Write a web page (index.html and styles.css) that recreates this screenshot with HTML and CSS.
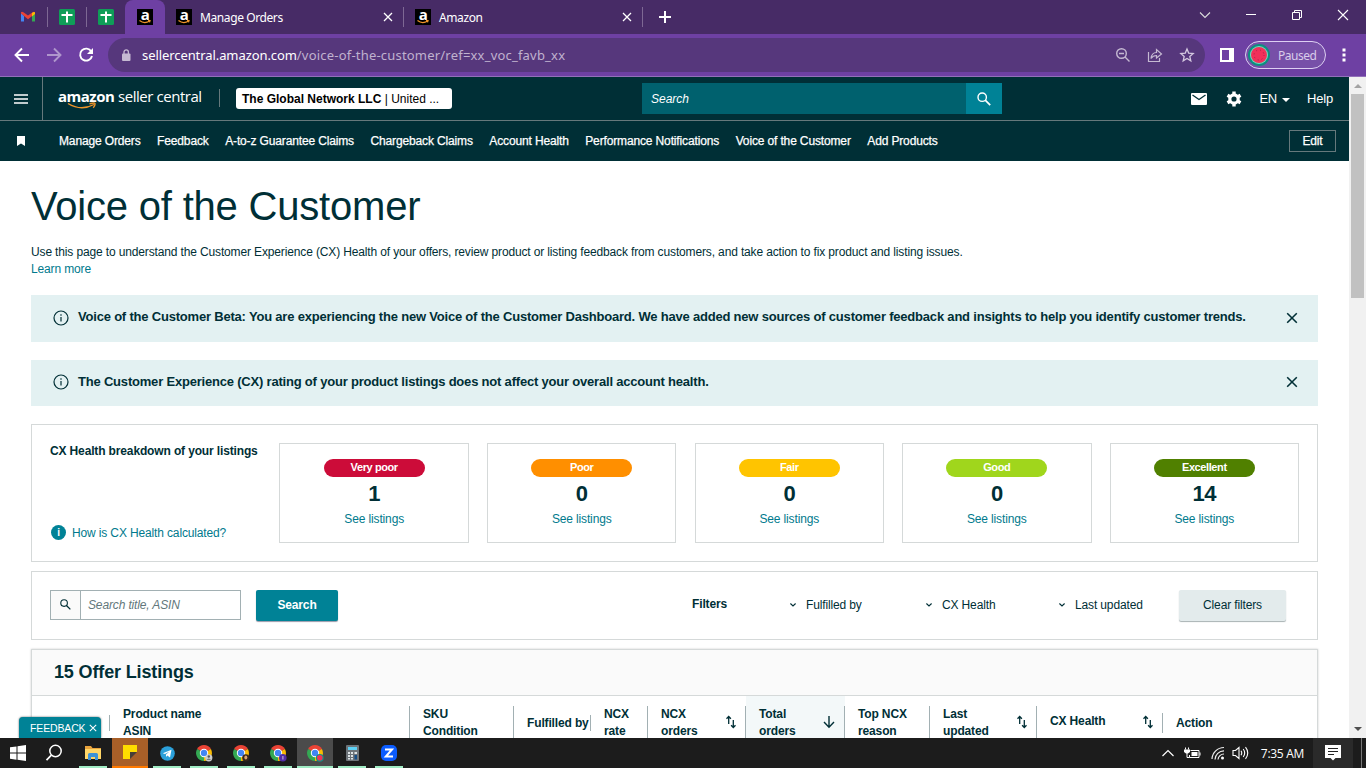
FILE: index.html
```html
<!DOCTYPE html>
<html lang="en">
<head>
    <meta charset="UTF-8">
    <meta name="viewport" content="width=device-width, initial-scale=1.0">
    <title>Voice of the Customer</title>
    <link rel="stylesheet" href="styles.css">
</head>
<body>
    <svg class="sprite">
        <symbol id="smile" viewBox="0 0 12 4"><path d="M.5 .6Q5.5 4.4 10.6 1M9 .6l2-.1-.5 1.9" fill="none" stroke="#f0942a" stroke-width="1.300"/></symbol>
        <symbol id="sheets" viewBox="0 0 16 16"><rect width="16" height="16" rx="1.5" fill="#0f9d58"/><path d="M2.500 6h11M8 2.500v11" stroke="#fff" stroke-width="2"/></symbol>
        <symbol id="close" viewBox="0 0 10 10"><path d="M1 1l8 8M9 1l-8 8" fill="none" stroke="currentColor" stroke-width="1.3"/></symbol>
        <symbol id="search" viewBox="0 0 14 14"><circle cx="5.2" cy="5.2" r="4.200" fill="none" stroke="currentColor" stroke-width="1.400"/><path d="M8.2 8.2l5 5" stroke="currentColor" stroke-width="1.700"/></symbol>
        <symbol id="info" viewBox="0 0 16 16"><circle cx="8" cy="8" r="7" fill="none" stroke="currentColor" stroke-width="1.200"/><path d="M8 7v4.500M8 4.300v1.400" stroke="currentColor" stroke-width="1.200"/></symbol>
        <symbol id="chev" viewBox="0 0 8 6"><path d="M1.4 1.5L4 4l2.6-2.5" fill="none" stroke="currentColor" stroke-width="1.1"/></symbol>
        <symbol id="sort" viewBox="0 0 10 14"><path d="M2.700 9V1.5M.5 3.700L2.700 1.5 4.900 3.700M7.300 5V12.500M5.100 10.300L7.300 12.500 9.500 10.300" fill="none" stroke="currentColor" stroke-width="1.3"/></symbol>
        <symbol id="chrome" viewBox="0 0 16 16">
            <path d="M8 8L1.1 4A8 8 0 0 1 14.9 4z" fill="#ea4335"/>
            <path d="M8 8L14.9 4A8 8 0 0 1 8 16z" fill="#fbbc04"/>
            <path d="M8 8v8A8 8 0 0 1 1.1 4z" fill="#34a853"/>
            <circle cx="8" cy="8" r="4.2" fill="#fff"/><circle cx="8" cy="8" r="3.2" fill="#4285f4"/>
        </symbol>
    </svg>

    <!-- Browser tabs -->
    <div class="tabstrip">
        <div class="tab pin first"><svg width="16" height="16" viewBox="0 0 16 16"><path d="M1 4v8.5h3V7z" fill="#4285f4"/><path d="M15 4v8.5h-3V7z" fill="#34a853"/><path d="M1 4.6V3.2Q2 2.2 3.4 3.2L8 6.6l4.6-3.4Q14 2.2 15 3.2v1.6L8 10.2z" fill="#ea4335"/><path d="M12 4v3.5l3-2.4V3.4Q14 2.4 12 4" fill="#fbbc04"/></svg></div>
        <div class="tab pin"><svg width="16" height="16"><use href="#sheets"/></svg></div>
        <div class="tab pin nosep"><svg width="16" height="16"><use href="#sheets"/></svg></div>
        <div class="tab active"><span class="fav">a<svg><use href="#smile"/></svg></span></div>
        <div class="tab wide"><span class="fav">a<svg><use href="#smile"/></svg></span><span class="tab-name">Manage Orders</span><svg class="tab-close"><use href="#close"/></svg></div>
        <div class="tab wide"><span class="fav">a<svg><use href="#smile"/></svg></span><span class="tab-name">Amazon</span><svg class="tab-close"><use href="#close"/></svg></div>
        <svg class="plus" width="12" height="12" viewBox="0 0 12 12"><path d="M6 0v12M0 6h12" stroke="#fff" stroke-width="2"/></svg>
        <div class="window-buttons">
            <svg width="12" height="12" viewBox="0 0 12 12"><path d="M1 3.500l5 5 5-5" fill="none" stroke="#ddd" stroke-width="1.1"/></svg>
            <svg width="12" height="12" viewBox="0 0 12 12"><path d="M1 5.500h10" stroke="#fff"/></svg>
            <svg width="12" height="12" viewBox="0 0 12 12"><path d="M1.500 3.500h7v7h-7zM3.500 3.500V1.500h7v7h-2" fill="none" stroke="#fff"/></svg>
            <svg width="12" height="12" viewBox="0 0 12 12"><path d="M1 1l10 10M11 1L1 11" stroke="#fff" stroke-width="1.1"/></svg>
        </div>
    </div>

    <!-- Address bar -->
    <div class="toolbar">
        <svg width="16" height="16" viewBox="0 0 16 16"><path d="M15 8H2M8 1.500L1.500 8l6.500 6.500" fill="none" stroke="#fff" stroke-width="1.900"/></svg>
        <svg class="dim" width="16" height="16" viewBox="0 0 16 16"><path d="M1 8h13M8 1.500L14.500 8 8 14.500" fill="none" stroke="#fff" stroke-width="1.900"/></svg>
        <svg width="16" height="16" viewBox="0 0 16 16"><path d="M13.300 4.500A6 6 0 1 0 14 9" fill="none" stroke="#fff" stroke-width="1.900"/><path d="M15 1v6H9z" fill="#fff"/></svg>
        <div class="omnibox">
            <svg width="10" height="13" viewBox="0 0 10 13"><rect x="1" y="4.500" width="8.500" height="7.500" rx="1" fill="#c5b9d2"/><path d="M3 5V3a2.200 2.200 0 0 1 4.400 0v2" fill="none" stroke="#c5b9d2" stroke-width="1.300"/></svg>
            <span class="url"><span class="domain">sellercentral.amazon.com</span><span class="path">/voice-of-the-customer/ref=xx_voc_favb_xx</span></span>
            <div class="omni-icons">
                <svg width="16" height="16" viewBox="0 0 16 16"><circle cx="6.500" cy="6.500" r="4.800" fill="none" stroke="#c5b9d2" stroke-width="1.400"/><path d="M10 10l4.500 4.500M4 6.500h5" stroke="#c5b9d2" stroke-width="1.400"/></svg>
                <svg width="16" height="16" viewBox="0 0 16 16"><path d="M1.500 5v9.500h11V11M4 11.500c.5-4 2.500-6 5.500-6V2.500L14.500 7 9.500 11V8.500c-2.500 0-4 .8-5.500 3z" fill="none" stroke="#c5b9d2" stroke-width="1.200"/></svg>
                <svg width="16" height="16" viewBox="0 0 16 16"><path d="M8 2l1.700 4.100 4.500.4-3.400 3 1 4.400L8 11.500l-3.800 2.400 1-4.400-3.400-3 4.500-.4z" fill="none" stroke="#d3c8df" stroke-width="1.300"/></svg>
            </div>
        </div>
        <svg class="side-panel" width="14" height="14" viewBox="0 0 14 14"><path d="M1 1h12v12H1z" fill="none" stroke="#fff" stroke-width="2"/><path d="M9 0h5v14H9z" fill="#fff"/></svg>
        <div class="profile"><svg class="melon" width="22" height="22" viewBox="0 0 22 22"><circle cx="11" cy="11" r="11" fill="#0d8f80"/><circle cx="11" cy="11" r="9" fill="#6fe0c0"/><circle cx="11" cy="11" r="8" fill="#f2305a"/><circle cx="11" cy="11" r="5" fill="none" stroke="#a3214a" stroke-dasharray="1 3"/></svg>Paused</div>
        <svg class="dots" width="4" height="14" viewBox="0 0 4 14"><path d="M.5 .5h3v3h-3zM.5 5.500h3v3h-3zM.5 10.500h3v3h-3z" fill="#fff"/></svg>
    </div>

    <div class="viewport">
        <div class="page">
            <header class="header">
                <div class="menu"><svg width="14" height="10" viewBox="0 0 14 10"><path d="M0 1h14M0 5h14M0 9h14" stroke="#fff" stroke-width="1.600"/></svg></div>
                <div class="logo"><b>amazon</b><span>seller central</span><svg viewBox="0 0 30 8"><path d="M1 1.500Q14 9.500 27 2.500M22.500 1.800q6-1.500 5.500 0 .2 1.800-1.800 4" fill="none" stroke="#f0942a" stroke-width="1.400"/></svg></div>
                <div class="merchant"><b>The Global Network LLC</b> | United ...</div>
                <div class="top-search"><span>Search</span><div><svg width="14" height="14"><use href="#search"/></svg></div></div>
                <div class="top-links">
                    <svg width="16" height="12" viewBox="0 0 16 12"><rect width="16" height="12" rx="1" fill="#fff"/><path d="M1.500 2L8 6.500 14.500 2" fill="none" stroke="#002f36" stroke-width="1.300"/></svg>
                    <svg class="gear" width="16" height="16" viewBox="0 0 16 16"><circle cx="8" cy="8" r="4.200" fill="none" stroke="#fff" stroke-width="3.200"/><path d="M8 .5v3M8 12.500v3M1.500 4.200l2.600 1.500M11.900 10.300l2.600 1.500M1.500 11.800l2.600-1.500M11.900 5.700l2.600-1.500" stroke="#fff" stroke-width="3.400"/></svg>
                    <span>EN</span>
                    <i class="caret"></i>
                    <span>Help</span>
                </div>
            </header>
            <nav class="nav">
                <svg class="bookmark" width="8" height="10" viewBox="0 0 8 10"><path d="M0 0h8v10L4 7.500 0 10z" fill="#fff"/></svg>
                <a>Manage Orders</a>
                <a>Feedback</a>
                <a>A-to-z Guarantee Claims</a>
                <a>Chargeback Claims</a>
                <a>Account Health</a>
                <a>Performance Notifications</a>
                <a>Voice of the Customer</a>
                <a>Add Products</a>
                <button class="edit">Edit</button>
            </nav>

            <main class="content">
                <h1>Voice of the Customer</h1>
                <p class="intro">Use this page to understand the Customer Experience (CX) Health of your offers, review product or listing feedback from customers, and take action to fix product and listing issues.</p>
                <a class="learn">Learn more</a>

                <div class="alert beta"><svg class="info"><use href="#info"/></svg><span>Voice of the Customer Beta: You are experiencing the new Voice of the Customer Dashboard. We have added new sources of customer feedback and insights to help you identify customer trends.</span><svg class="dismiss"><use href="#close"/></svg></div>
                <div class="alert"><svg class="info"><use href="#info"/></svg><span>The Customer Experience (CX) rating of your product listings does not affect your overall account health.</span><svg class="dismiss"><use href="#close"/></svg></div>

                <section class="health">
                    <div class="health-side">
                        <h3>CX Health breakdown of your listings</h3>
                        <a><span class="info-dot">i</span>How is CX Health calculated?</a>
                    </div>
                    <div class="card"><span class="pill very-poor">Very poor</span><strong>1</strong><a>See listings</a></div>
                    <div class="card"><span class="pill poor">Poor</span><strong>0</strong><a>See listings</a></div>
                    <div class="card"><span class="pill fair">Fair</span><strong>0</strong><a>See listings</a></div>
                    <div class="card"><span class="pill good">Good</span><strong>0</strong><a>See listings</a></div>
                    <div class="card"><span class="pill excellent">Excellent</span><strong>14</strong><a>See listings</a></div>
                </section>

                <section class="filters">
                    <div class="asin-box"><span><svg width="11" height="11"><use href="#search"/></svg></span><em>Search title, ASIN</em></div>
                    <button class="search-btn">Search</button>
                    <b class="filters-label">Filters</b>
                    <div class="filter f1"><svg><use href="#chev"/></svg>Fulfilled by</div>
                    <div class="filter f2"><svg><use href="#chev"/></svg>CX Health</div>
                    <div class="filter f3"><svg><use href="#chev"/></svg>Last updated</div>
                    <button class="clear-btn">Clear filters</button>
                </section>

                <section class="listings">
                    <h2>15 Offer Listings</h2>
                    <div class="thead">
                        <div class="th c0"></div>
                        <div class="th c1">Product name<br>ASIN</div>
                        <div class="th c2">SKU<br>Condition</div>
                        <div class="th c3 single">Fulfilled by</div>
                        <div class="th c4">NCX<br>rate</div>
                        <div class="th c5">NCX<br>orders<svg class="sort"><use href="#sort"/></svg></div>
                        <div class="th c6 sorted">Total<br>orders<svg class="down" viewBox="0 0 12 14"><path d="M6 1v11M1 7l5 5.200L11 7" fill="none" stroke="currentColor" stroke-width="1.400"/></svg></div>
                        <div class="th c7">Top NCX<br>reason</div>
                        <div class="th c8">Last<br>updated<svg class="sort"><use href="#sort"/></svg></div>
                        <div class="th c9 single">CX Health<svg class="sort"><use href="#sort"/></svg></div>
                        <div class="th c10 single">Action</div>
                    </div>
                </section>
            </main>
            <div class="feedback">FEEDBACK<svg><use href="#close"/></svg></div>
        </div>
        <div class="scrollbar"><i class="up"></i><div class="thumb"></div><i class="dn"></i></div>
    </div>

    <!-- Windows taskbar -->
    <div class="taskbar">
        <div class="task"><svg width="16" height="16" viewBox="0 0 16 16"><path d="M0 2.300L6.500 1.400v6.200H0zM7.500 1.200L16 0v7.600H7.500zM0 8.500h6.500v6.200L0 13.800zM7.500 8.500H16V16l-8.500-1.200z" fill="#fff"/></svg></div>
        <div class="task find"><svg width="18" height="18" viewBox="0 0 18 18"><circle cx="10.500" cy="7" r="5.700" fill="none" stroke="#fff" stroke-width="1.500"/><path d="M6.400 11.200L1.500 16.200" stroke="#fff" stroke-width="1.700"/></svg></div>
        <div class="task open"><svg width="18" height="16" viewBox="0 0 18 16"><path d="M1 1h6l1.500 2H17v4H1z" fill="#e8a33d"/><path d="M1 4h16v10H1z" fill="#ffd667"/><path d="M4 15V9.500Q4 8 5.500 8h7Q14 8 14 9.500V15h-3v-3H7v3z" fill="#3c92d8"/></svg></div>
        <div class="task notes"><svg width="14" height="14" viewBox="0 0 14 14"><path d="M0 0h14v7H7v7H0z" fill="#fd0"/><path d="M7 7h7l-7 7z" fill="#463f37"/></svg></div>
        <div class="task open"><svg width="15" height="15" viewBox="0 0 15 15"><circle cx="7.500" cy="7.500" r="7.300" fill="#2ba0da"/><path d="M2.800 7.300L11.500 3.800 10 11.500 7.300 9.500 6 11V8.500l3.500-3-4.500 2.600z" fill="#fff"/></svg></div>
        <div class="task open"><svg width="17" height="17" viewBox="0 0 17 17"><use href="#chrome" width="16" height="16"/><circle cx="12.800" cy="12.800" r="3.600" fill="#ccc"/><circle cx="12.800" cy="11.500" r="1.200" fill="#555"/><path d="M10.500 15q2.300-3 4.600 0" fill="#777"/></svg></div>
        <div class="task open"><svg width="17" height="17" viewBox="0 0 17 17"><use href="#chrome" width="16" height="16"/><circle cx="12.800" cy="12.800" r="3.600" fill="#33251d"/><ellipse cx="12.800" cy="12.500" rx="1.500" ry="2" fill="#d9a36d"/></svg></div>
        <div class="task open"><svg width="17" height="17" viewBox="0 0 17 17"><use href="#chrome" width="16" height="16"/><circle cx="12.800" cy="12.800" r="3.800" fill="#512da8"/><path d="M12 11h1.700v3.500H12z" fill="#9a86cb"/></svg></div>
        <div class="task open current"><svg width="17" height="17" viewBox="0 0 17 17"><use href="#chrome" width="16" height="16"/><circle cx="12.800" cy="12.800" r="3.900" fill="#0d9488"/><circle cx="12.800" cy="12.800" r="2.800" fill="#f0325a"/></svg></div>
        <div class="task open"><svg width="13" height="16" viewBox="0 0 13 16"><rect width="13" height="16" rx="1" fill="#6d7378"/><path d="M2 2h9v3H2z" fill="#5ed1f5"/><path d="M2 7h2v2H2zM5 7h2v2H5zM2 10h2v2H2zM5 10h2v2H5zM2 13h2v1.500H2zM5 13h2v1.500H5zM8.500 7H11v2H8.500z" fill="#dde3e6"/><path d="M8.500 10H11v4.500H8.500z" fill="#164e86"/></svg></div>
        <div class="task open"><svg width="16" height="16" viewBox="0 0 16 16"><rect width="16" height="16" rx="5" fill="#0b5cff"/><path d="M4 4.500h7L4.800 11.500H12" fill="none" stroke="#fff" stroke-width="2"/></svg></div>
        <div class="tray">
            <svg width="14" height="8" viewBox="0 0 14 8"><path d="M1.500 7L7 1.500 12.500 7" fill="none" stroke="#fff" stroke-width="1.200"/></svg>
            <svg class="battery" width="17" height="13" viewBox="0 0 17 13"><path d="M6.500 3.500h8.500v7H5.500V8M16 5.500v3M1.500 .5v2M4.500 .5v2M3 6v4.500h2.500" fill="none" stroke="#fff"/><path d="M0 2.500h6V5L4 6.500H2L0 5zM7.500 5h6v4H7.500z" fill="#fff"/></svg>
            <svg class="wifi" width="14" height="14" viewBox="0 0 14 14"><path d="M1 13A12 12 0 0 1 13 1.500M4 13.500A9 9 0 0 1 13 4.800M7 13.500A6 6 0 0 1 13 8" fill="none" stroke="#eee" stroke-width="1.200"/><circle cx="11.500" cy="12" r="1.500" fill="#fff"/></svg>
            <svg class="sound" width="17" height="14" viewBox="0 0 17 14"><path d="M1 4.500h2.500L7 1.500v11L3.500 9.500H1zM9 4.800q1.500 2.200 0 4.400M11.200 3q3 4 0 8M13.500 1.200q4.500 5.800 0 11.600" fill="none" stroke="#fff" stroke-width="1.100"/></svg>
            <span class="clock">7:35 AM</span>
            <div class="notify"><svg width="16" height="16" viewBox="0 0 16 16"><path d="M0 0h16v13h-5.500L8 15.500 5.500 13H0z" fill="#fff"/><path d="M3 3.500h10M3 6.500h10M3 9.500h6" stroke="#222"/></svg></div>
        </div>
    </div>
</body>
</html>
```
FILE: styles.css
```css
* {
    margin: 0;
    padding: 0;
    box-sizing: border-box;
}

body {
    width: 1366px;
    height: 768px;
    overflow: hidden;
    background: #fff;
    color: #002f36;
    font-family: 'Liberation Sans', Arial, sans-serif;
    font-size: 12px;
}

svg {
    flex: none;
    display: block;
}

.sprite {
    display: none;
}

button {
    font-family: inherit;
    font-size: 12px;
    letter-spacing: inherit;
    border: none;
}

/* Tabs */
.tabstrip {
    display: flex;
    align-items: center;
    height: 34px;
    background: #472b66;
    color: #fff;
    font: 12px 'Noto Sans', sans-serif;
    letter-spacing: -.4px;
}

.tab {
    display: flex;
    align-items: center;
    height: 34px;
    padding-left: 11px;
}

.tab.pin {
    width: 39px;
}

.tab.first {
    width: 48px;
    padding-left: 20px;
}

.tab.nosep {
    width: 38px;
}

.tab.pin:not(.nosep),
.tab.wide {
    background: linear-gradient(#7e6894, #7e6894) right center / 1px 20px no-repeat;
}

.tab.active {
    width: 40px;
    padding-left: 12px;
    background: #6e40a3;
    border-radius: 8px 8px 0 0;
}

.tab.wide {
    width: 239px;
}

.fav {
    display: flex;
    flex-direction: column;
    align-items: center;
    width: 16px;
    height: 16px;
    background: #000;
    font: bold 15px/11px 'Open Sans', sans-serif;
}

.fav svg {
    width: 12px;
    height: 4px;
}

.tab-name {
    margin-left: 8px;
    flex: 1;
}

.tab-close {
    width: 10px;
    height: 10px;
    margin-right: 11px;
}

.plus {
    margin-left: 16px;
}

.window-buttons {
    display: flex;
    gap: 34px;
    margin: -5px 17px 0 auto;
}

/* Toolbar */
.toolbar {
    display: flex;
    align-items: center;
    height: 43px;
    padding-left: 14px;
    gap: 16px;
    background: #6e40a3;
    border-bottom: 1px solid #9270b9;
}

.dim {
    opacity: .45;
}

.omnibox {
    display: flex;
    align-items: center;
    width: 1097px;
    height: 34px;
    margin-left: -2px;
    padding: 0 10px 0 13px;
    border-radius: 17px;
    background: #56377c;
}

.url {
    margin-left: 11px;
    font: 13px 'Noto Sans', sans-serif;
    color: #c0b2cf;
}

.domain {
    color: #fff;
    letter-spacing: -.08px;
}

.path {
    letter-spacing: .2px;
}

.omni-icons {
    display: flex;
    gap: 16px;
    margin-left: auto;
}

.side-panel {
    margin-left: -1px;
}

.profile {
    display: flex;
    align-items: center;
    width: 81px;
    height: 28px;
    margin-left: -5px;
    border: 1px solid #ddd0f2;
    border-radius: 14px;
    background: #7750a8;
    color: #d9ccea;
    font: 12px 'Noto Sans', sans-serif;
    letter-spacing: -.5px;
}

.melon {
    margin: 0 8px 0 2px;
}

/* Page frame */
.viewport {
    display: flex;
    height: 661px;
    overflow: hidden;
    letter-spacing: -.14px;
}

.page {
    position: relative;
    width: 1349px;
    height: 661px;
    overflow: hidden;
}

.scrollbar {
    display: flex;
    flex-direction: column;
    align-items: center;
    width: 17px;
    background: #f1f1f1;
}

.scrollbar i {
    width: 0;
    height: 0;
    border: 4px solid transparent;
}

.scrollbar .up {
    margin-top: 3px;
    border-bottom-color: #a3a3a3;
}

.scrollbar .thumb {
    width: 13px;
    height: 204px;
    margin-top: 6px;
    background: #c1c1c1;
}

.scrollbar .dn {
    margin: auto 0 3px;
    border-top-color: #505050;
}

/* Seller Central header */
.header {
    display: flex;
    align-items: center;
    height: 44px;
    background: #002f36;
    border-bottom: 1px solid #66797c;
    color: #fff;
    letter-spacing: 0;
}

.menu {
    display: flex;
    align-items: center;
    justify-content: center;
    width: 43px;
    height: 43px;
    border-right: 1px solid #66797c;
}

.logo {
    position: relative;
    display: flex;
    width: 177px;
    height: 18px;
    padding-left: 15px;
    margin-top: -2px;
    border-right: 1px solid #66797c;
    font: 15px/15px 'Open Sans', sans-serif;
}

.logo b {
    width: 60px;
    letter-spacing: -.5px;
}

.logo span {
    letter-spacing: -.45px;
}

.logo svg {
    position: absolute;
    left: 24px;
    top: 13px;
    width: 30px;
    height: 8px;
}

.merchant {
    width: 216px;
    height: 21px;
    margin-left: 16px;
    padding-left: 6px;
    border-radius: 3px;
    background: #fff;
    color: #000;
    line-height: 22px;
    white-space: nowrap;
}

.top-search {
    display: flex;
    align-items: center;
    justify-content: space-between;
    width: 360px;
    height: 31px;
    margin-left: 190px;
    padding-left: 9px;
    background: #00616e;
    font-style: italic;
}

.top-search div {
    display: flex;
    align-items: center;
    justify-content: center;
    width: 36px;
    height: 31px;
    background: #008296;
}

.top-links {
    display: flex;
    align-items: center;
    margin: 0 16px 0 auto;
    font-size: 13px;
    letter-spacing: -.2px;
}

.gear {
    margin: 0 17px 0 19px;
}

.caret {
    margin: 3px 17px 0 5px;
    border: 4px solid transparent;
    border-top-color: #fff;
    border-bottom: 0;
}

.nav {
    display: flex;
    align-items: center;
    height: 40px;
    padding: 0 13px 0 17px;
    gap: 16.500px;
    background: #002f36;
    color: #fff;
    -webkit-text-stroke: .25px;
}

.bookmark {
    margin-right: 17.500px;
}

.edit {
    width: 47px;
    height: 22px;
    margin-left: auto;
    border: 1px solid #66797c;
    background: none;
    color: #fff;
}

/* Content */
.content {
    padding: 0 31px;
}

h1 {
    height: 83px;
    padding-top: 22px;
    font-size: 40px;
    line-height: 47px;
    letter-spacing: -.2px;
    font-weight: normal;
}

.intro {
    height: 17px;
    line-height: 16px;
    white-space: nowrap;
}

a {
    text-decoration: none;
}

.content a {
    color: #007a8d;
}

.learn {
    display: block;
    height: 34px;
    line-height: 16px;
}

.alert {
    display: flex;
    align-items: center;
    height: 46px;
    margin-bottom: 18px;
    padding: 0 20px 2px 22px;
    background: #e3f1f2;
    font-size: 13px;
    font-weight: bold;
    letter-spacing: -.2px;
    white-space: nowrap;
}

.beta {
    height: 47px;
}

.info {
    width: 16px;
    height: 16px;
    margin-right: 9px;
}

.alert span {
    margin-top: -2px;
}

.dismiss {
    width: 12px;
    height: 12px;
    margin-left: auto;
}

.health {
    display: flex;
    gap: 18.1px;
    height: 138px;
    padding: 18px;
    border: 1px solid #d5d9d9;
}

.health-side {
    display: flex;
    flex-direction: column;
    justify-content: space-between;
    width: 211.38px;
    height: 97px;
    white-space: nowrap;
}

.health-side h3 {
    font-size: 12px;
    line-height: 16px;
}

.health-side a {
    display: flex;
    align-items: center;
}

.info-dot {
    width: 15px;
    height: 15px;
    margin: 0 6px 0 1px;
    border-radius: 50%;
    background: #008296;
    color: #fff;
    font-size: 10px;
    font-weight: bold;
    line-height: 15px;
    text-align: center;
}

.card {
    display: flex;
    flex-direction: column;
    align-items: center;
    flex: 1;
    height: 100px;
    padding-top: 15px;
    border: 1px solid #d5d9d9;
}

.pill {
    width: 101px;
    height: 18px;
    border-radius: 9px;
    color: #fff;
    font-size: 11px;
    font-weight: bold;
    letter-spacing: -.4px;
    line-height: 17px;
    text-align: center;
}

.very-poor { background: #cc0c39; }
.poor { background: #ff8f00; }
.fair { background: #ffc400; }
.good { background: #a0d61c; }
.excellent { background: #508000; }

.card strong {
    margin-top: 4px;
    font-size: 22px;
    letter-spacing: -.5px;
    line-height: 26px;
}

.card a {
    margin-top: 4px;
    line-height: 16px;
}

.filters {
    display: flex;
    height: 69px;
    margin: 9px 0;
    padding: 18px 31px 0 18px;
    border: 1px solid #d5d9d9;
    line-height: 29px;
}

.asin-box {
    display: flex;
    width: 191px;
    height: 30px;
    border: 1px solid #a2b0b3;
    color: #62777b;
}

.asin-box span {
    width: 30px;
    padding: 8px 0 0 9px;
    margin-right: 7px;
    border-right: 1px solid #a2b0b3;
    background: #fafafa;
    color: #002f36;
}

.search-btn {
    width: 82px;
    height: 31px;
    margin: 0 354px 0 15px;
    padding-bottom: 2px;
    border-radius: 2px;
    background: #008296;
    color: #fff;
    font-weight: bold;
    box-shadow: 0 1px 1px #99a;
}

.filters-label {
    width: 97px;
    line-height: 28px;
}

.filter {
    display: flex;
    align-items: center;
    height: 30px;
    white-space: nowrap;
}

.filter svg {
    width: 8px;
    height: 6px;
    margin-right: 9px;
}

.f1 { width: 136px; }
.f2 { width: 133px; }
.f3 { width: 121px; }

.clear-btn {
    width: 107px;
    height: 31px;
    margin-left: auto;
    padding-bottom: 2px;
    border-radius: 2px;
    background: #e3ebec;
    color: #002f36;
    box-shadow: 0 1px 1px #a8b2b3;
}

.listings {
    height: 120px;
    border: 1px solid #d5d9d9;
    box-shadow: 0 0 2px #ccc;
}

.listings h2 {
    height: 46px;
    padding-left: 22px;
    border-bottom: 1px solid #d5d9d9;
    background: #fafafa;
    font-size: 18px;
    line-height: 44px;
}

.thead {
    display: flex;
    height: 60px;
    font-weight: bold;
    line-height: 17px;
}

.th {
    position: relative;
    padding: 10px 0 0 13px;
    white-space: nowrap;
    background: linear-gradient(#a2b0b3, #a2b0b3) right 10px / 1px 40px no-repeat;
}

.th.single {
    padding-top: 19px;
}

.c0 { width: 78px; background-position: right 19px; background-size: 1px 16px; }
.c1 { width: 300px; }
.c2 { width: 104px; }
.c3 { width: 77px; background-position: right 19px; background-size: 1px 16px; }
.c4 { width: 57px; }
.c5 { width: 98px; }
.c6 { width: 99px; }
.c7 { width: 85px; }
.c8 { width: 107px; }
.c9 { width: 126px; background-position: right 17px; background-size: 1px 20px; }
.c10 { flex: 1; background: none; }

.th.c9 {
    padding-top: 17px;
}

.sorted {
    background-color: #f3f8f9;
}

/* sort arrows sit over the right part of the cell */
.sort,
.down {
    position: absolute;
    right: 10px;
    top: 19px;
    width: 10px;
    height: 14px;
}

.down {
    right: 10px;
    width: 12px;
}

.feedback {
    position: absolute;
    left: 19px;
    bottom: 0;
    display: flex;
    align-items: center;
    width: 82px;
    height: 21px;
    padding-left: 11px;
    border-radius: 4px 4px 0 0;
    background: #008296;
    box-shadow: 0 0 2px #555;
    color: #fff;
    font-size: 10.500px;
}

.feedback svg {
    width: 8px;
    height: 8px;
    margin-left: 4px;
}

/* Taskbar */
.taskbar {
    display: flex;
    height: 30px;
    background: #1c1c1c;
    color: #fff;
}

.task {
    display: flex;
    align-items: center;
    justify-content: center;
    width: 36px;
    height: 30px;
    margin-right: 1px;
}

.find {
    margin-right: 2px;
    padding-right: 2px;
}

.open {
    background: linear-gradient(#a0ecc4, #a0ecc4) center bottom / 28px 2px no-repeat;
}

.notes {
    background: #a85f28;
    border-bottom: 2px solid #ff7a00;
}

.current {
    background-color: #4b4b4b;
    background-size: 36px 2px;
}

.tray {
    display: flex;
    align-items: center;
    margin-left: auto;
}

.battery {
    margin-left: 9px;
}

.wifi {
    margin-left: 10px;
}

.sound {
    margin-left: 7px;
}

.clock {
    margin: 0 9px 0 12px;
    font: 12px 'Open Sans', sans-serif;
    letter-spacing: -.3px;
}

.notify {
    display: flex;
    align-items: center;
    justify-content: center;
    width: 40px;
    height: 30px;
    margin-right: 13px;
    background: #2a2a2a;
    box-shadow: 8px 0 0 #1c1c1c, 9px 0 0 #777;
}
```
